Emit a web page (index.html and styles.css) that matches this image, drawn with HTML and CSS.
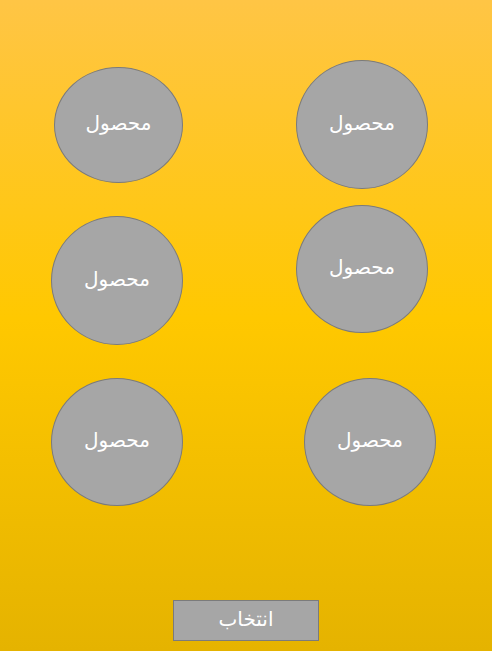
FILE: index.html
```html
<!DOCTYPE html>
<html lang="fa">
<head>
<meta charset="utf-8">
<link rel="stylesheet" href="styles.css">
</head>
<body>
<div class="page">
  <div class="grid">
    <div class="col col-left">
      <div class="item item-1">محصول</div>
      <div class="item item-3">محصول</div>
      <div class="item item-5">محصول</div>
    </div>
    <div class="col col-right">
      <div class="item item-2">محصول</div>
      <div class="item item-4">محصول</div>
      <div class="item item-6">محصول</div>
    </div>
  </div>
  <div class="actions">
    <button class="select">انتخاب</button>
  </div>
</div>
</body>
</html>
```
FILE: styles.css
```css
html, body {
  margin: 0;
  padding: 0;
}
body {
  width: 492px;
  height: 651px;
  overflow: hidden;
  font-family: "DejaVu Sans", "Liberation Sans", sans-serif;
}
.page {
  width: 492px;
  height: 651px;
  box-sizing: border-box;
  background: linear-gradient(to bottom, #ffc545 0%, #ffc800 49%, #e5b300 100%);
  display: flex;
  flex-direction: column;
}
.grid {
  display: flex;
  height: 600px;
}
.col {
  display: flex;
  flex-direction: column;
}
.col-left {
  width: 245px;
  padding-left: 51px;
  box-sizing: border-box;
}
.col-right {
  padding-left: 51px;
}
.item {
  box-sizing: border-box;
  width: 132px;
  height: 128px;
  border-radius: 50%;
  background: #a6a6a6;
  border: 1px solid #7b7b7b;
  color: #ffffff;
  font-size: 20px;
  padding-bottom: 4px;
  display: flex;
  align-items: center;
  justify-content: center;
  direction: rtl;
}
.item-1 {
  margin-top: 67px;
  margin-left: 3px;
  width: 129px;
  height: 116px;
}
.item-3 {
  margin-top: 33px;
  height: 129px;
}
.item-5 {
  margin-top: 33px;
}
.item-2 {
  margin-top: 60px;
  height: 129px;
}
.item-4 {
  margin-top: 16px;
}
.item-6 {
  margin-top: 45px;
  margin-left: 8px;
}
.actions {
  display: flex;
  padding-left: 173px;
}
.select {
  width: 146px;
  height: 41px;
  box-sizing: border-box;
  background: #a6a6a6;
  border: 1px solid #7b7b7b;
  color: #ffffff;
  font-family: "DejaVu Sans", "Liberation Sans", sans-serif;
  font-size: 20px;
  padding: 0 0 4px 0;
  direction: rtl;
}
```
